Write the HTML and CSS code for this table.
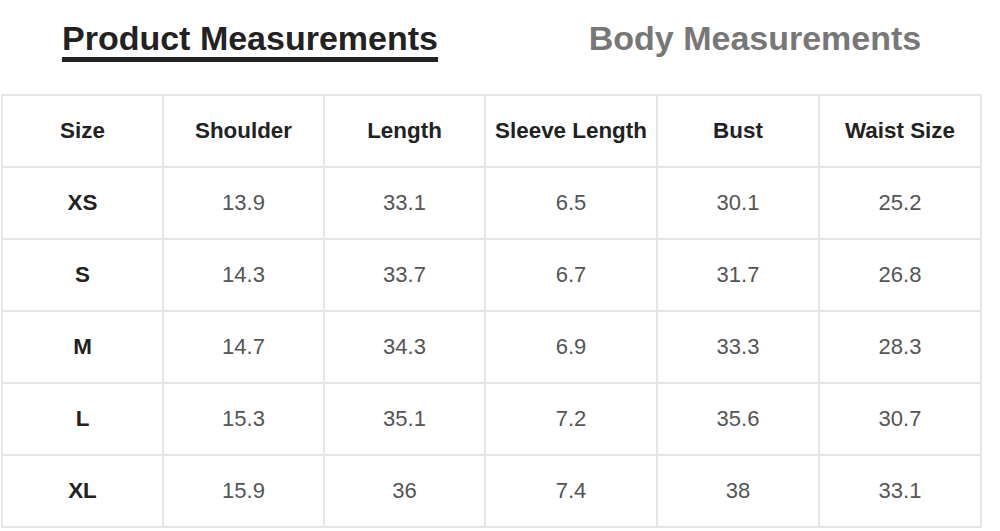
FILE: index.html
```html
<!DOCTYPE html>
<html>
<head>
<meta charset="utf-8">
<link rel="stylesheet" href="styles.css">
</head>
<body>
<div class="tabs">
  <div class="tab-slot"><span class="tab active">Product Measurements</span></div>
  <div class="tab-slot right"><span class="tab">Body Measurements</span></div>
</div>
<table class="size-table">
  <colgroup>
    <col class="c1"><col class="c2"><col class="c3"><col class="c4"><col class="c5"><col class="c6">
  </colgroup>
  <thead>
    <tr><th>Size</th><th>Shoulder</th><th>Length</th><th>Sleeve Length</th><th>Bust</th><th>Waist Size</th></tr>
  </thead>
  <tbody>
    <tr><th>XS</th><td>13.9</td><td>33.1</td><td>6.5</td><td>30.1</td><td>25.2</td></tr>
    <tr><th>S</th><td>14.3</td><td>33.7</td><td>6.7</td><td>31.7</td><td>26.8</td></tr>
    <tr><th>M</th><td>14.7</td><td>34.3</td><td>6.9</td><td>33.3</td><td>28.3</td></tr>
    <tr><th>L</th><td>15.3</td><td>35.1</td><td>7.2</td><td>35.6</td><td>30.7</td></tr>
    <tr><th>XL</th><td>15.9</td><td>36</td><td>7.4</td><td>38</td><td>33.1</td></tr>
  </tbody>
</table>
</body>
</html>
```
FILE: styles.css
```css
html, body {
  margin: 0;
  padding: 0;
  background: #fff;
  font-family: "Liberation Sans", Arial, sans-serif;
}
.tabs {
  display: flex;
  width: 1000px;
  padding-top: 19px;
  margin-bottom: 32px;
}
.tab-slot {
  flex: 0 0 500px;
  text-align: center;
}
.tab-slot.right {
  padding-left: 10px;
  box-sizing: border-box;
}
.tab {
  display: inline-block;
  font-size: 34px;
  line-height: 38px;
  font-weight: bold;
  color: #777;
}
.tab.active {
  color: #222;
  border-bottom: 5px solid #222;
}
.size-table {
  margin-left: 1px;
  width: 981px;
  border-collapse: collapse;
  table-layout: fixed;
}
.c1, .c2, .c3 { width: 161px; }
.c4 { width: 172px; }
.c5, .c6 { width: 162px; }
.size-table th, .size-table td {
  border: 2px solid #e6e6e6;
  height: 70px;
  padding: 0;
  text-align: center;
  vertical-align: middle;
  font-size: 22px;
}
.size-table th {
  color: #222;
  font-weight: bold;
  font-size: 22.4px;
}
.size-table td {
  color: #555;
  font-weight: normal;
}
```
